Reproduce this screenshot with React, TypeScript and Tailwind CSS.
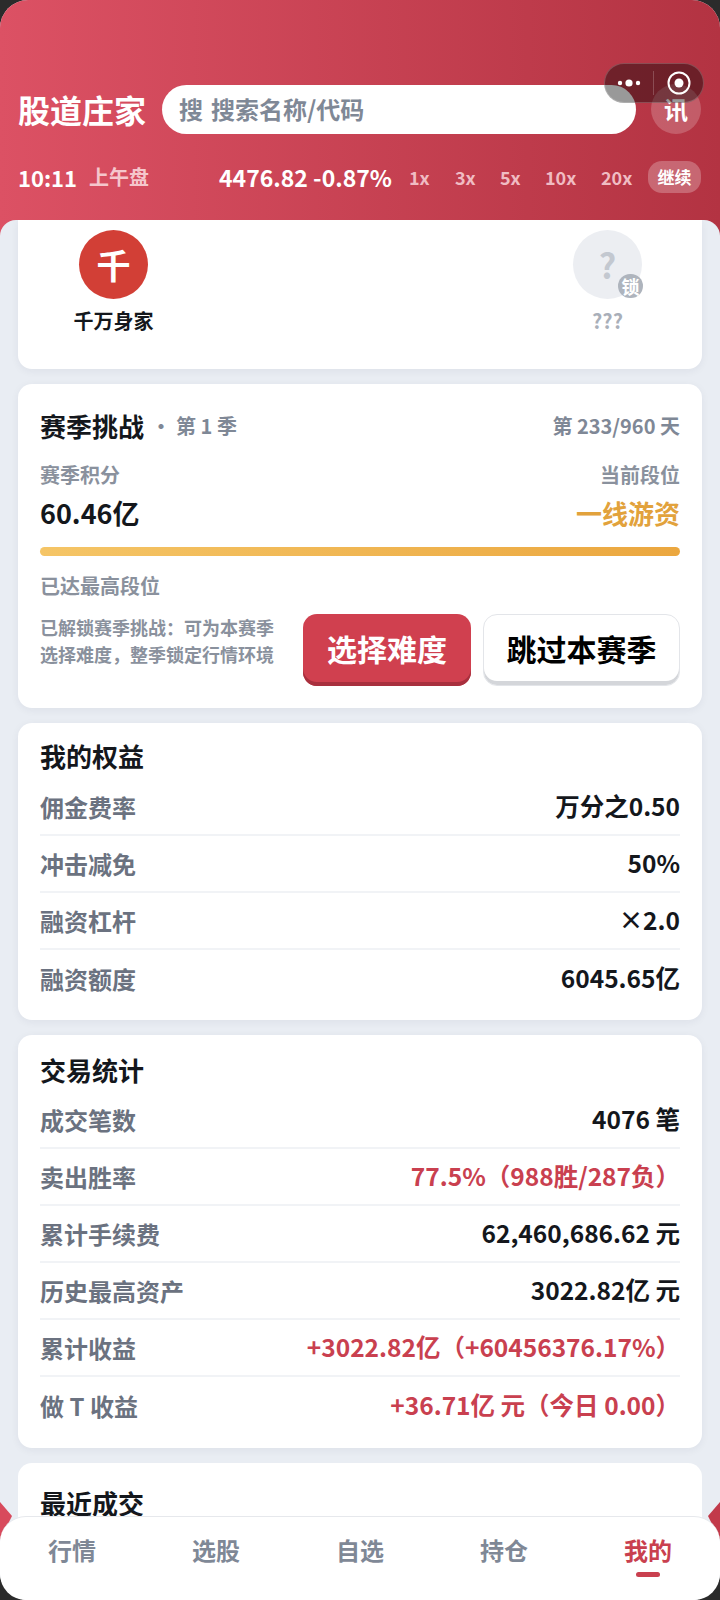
const font = "font-['Noto_Sans_CJK_SC','Noto_Sans',sans-serif]"

const rights = [
  { label: '佣金费率', value: '万分之0.50' },
  { label: '冲击减免', value: '50%' },
  { label: '融资杠杆', value: '×2.0' },
  { label: '融资额度', value: '6045.65亿' },
]

const stats = [
  { label: '成交笔数', value: '4076 笔' },
  { label: '卖出胜率', value: '77.5%（988胜/287负）', red: true },
  { label: '累计手续费', value: '62,460,686.62 元' },
  { label: '历史最高资产', value: '3022.82亿 元' },
  { label: '累计收益', value: '+3022.82亿（+60456376.17%）', red: true },
  { label: '做 T 收益', value: '+36.71亿 元（今日 0.00）', red: true },
]

const tabs = ['行情', '选股', '自选', '持仓', '我的']

function Row({ label, value, red, last }: { label: string; value: string; red?: boolean; last?: boolean }) {
  return (
    <div className={`flex h-[57px] items-center justify-between ${last ? '' : 'border-b-2 border-[#f1f3f6]'}`}>
      <span className="text-[24px] font-bold text-[#6b7280]">{label}</span>
      <span className={`text-[24.5px] font-bold ${red ? 'text-[#c9404f]' : 'text-[#14171c]'}`}>{value}</span>
    </div>
  )
}

export default function App() {
  return (
    <div className={`relative h-[1600px] w-[720px] overflow-hidden bg-[#2b2b2b] ${font}`}>
      <div className="flex h-full flex-col overflow-hidden rounded-[28px] bg-[#e9edf3]">
        {/* Header */}
        <div className="h-[240px] shrink-0 bg-[linear-gradient(90deg,#dc5164,#b33342)] pt-[84px] pl-[18px]">
          <div className="flex items-center">
            <span className="w-[128px] text-[32px] leading-[49px] font-bold whitespace-nowrap text-white">股道庄家</span>
            <div className="ml-[16px] flex h-[49px] w-[474px] items-center rounded-full bg-white pl-[17px]">
              <span className="text-[24px] font-bold text-[#7f8896]">搜</span>
              <span className="ml-[8px] text-[24px] font-bold text-[#7f8896]">搜索名称/代码</span>
            </div>
            <div className="ml-[15px] flex h-[50px] w-[50px] items-center justify-center rounded-full bg-white/20 text-[24px] font-bold text-white">讯</div>
          </div>
          <div className="mt-[27px] flex h-[32px] items-center text-white">
            <div className="flex w-[201px] items-center">
              <span className="text-[22px] font-bold">10:11</span>
              <span className="ml-[12px] text-[20px] font-bold text-[#f5c6cc]">上午盘</span>
            </div>
            <span className="w-[190px] text-[23px] font-bold whitespace-nowrap">4476.82 -0.87%</span>
            <div className="flex items-center text-[18px] font-bold text-[#f0bcc3]">
              <span className="w-[46px]">1x</span>
              <span className="w-[45px]">3x</span>
              <span className="w-[45px]">5x</span>
              <span className="w-[56px]">10x</span>
              <span className="w-[47px]">20x</span>
            </div>
            <span className="flex h-[32px] w-[53px] items-center justify-center rounded-[14px] bg-white/25 text-[17px] font-bold">继续</span>
          </div>
        </div>

        {/* Scroll content */}
        <div className="relative -mt-[20px] flex flex-1 flex-col gap-[15px] overflow-hidden rounded-t-[16px] bg-[#e9edf3] px-[18px]">
          <div className="flex h-[149px] shrink-0 justify-between rounded-b-[14px] bg-white pt-[10px] pr-[49px] pl-[50px] shadow-[0_2px_8px_rgba(30,40,60,0.06)]">
            <div className="flex w-[91px] flex-col items-center">
              <div className="flex h-[69px] w-[69px] items-center justify-center rounded-full bg-[#d23f36] text-[34px] font-bold text-white">千</div>
              <span className="mt-[7px] text-[20px] font-bold whitespace-nowrap text-[#14171c]">千万身家</span>
            </div>
            <div className="relative flex w-[91px] flex-col items-center">
              <div className="flex h-[69px] w-[69px] items-center justify-center rounded-full bg-[#eceef2] text-[34px] font-bold text-[#c3c8d0]">?</div>
              <span className="absolute top-[44px] right-[10px] flex h-[24px] w-[25px] items-center justify-center rounded-full bg-[#aeb4bd] text-[18px] font-bold text-white">锁</span>
              <span className="mt-[7px] text-[20px] font-bold text-[#a9afb9]">???</span>
            </div>
          </div>

          <div className="flex h-[324px] shrink-0 flex-col rounded-[14px] bg-white px-[22px] pt-[26px] shadow-[0_2px_8px_rgba(30,40,60,0.06)]">
            <div className="flex items-center justify-between">
              <div className="flex items-center">
                <span className="text-[26px] leading-[32px] font-bold text-[#14171c]">赛季挑战</span>
                <span className="-mr-[3px] ml-[7px] text-[20px] font-bold text-[#7f8896]">·</span>
                <span className="ml-[8px] text-[20px] font-bold text-[#7f8896]">第 1 季</span>
              </div>
              <span className="text-[20px] font-bold text-[#7f8896]">第 233/960 天</span>
            </div>
            <div className="mt-[20px] flex justify-between text-[20px] leading-[26px] font-bold text-[#8a919d]">
              <span>赛季积分</span>
              <span>当前段位</span>
            </div>
            <div className="mt-[7px] flex justify-between leading-[36px] font-bold">
              <span className="text-[27px] text-[#14171c]">60.46亿</span>
              <span className="text-[26px] text-[#e2a23c]">一线游资</span>
            </div>
            <div className="mt-[16px] h-[9px] rounded-full bg-[linear-gradient(90deg,#f5c566,#eba73f)]" />
            <div className="mt-[17px] text-[20px] leading-[26px] font-bold text-[#8a919d]">已达最高段位</div>
            <div className="mt-[15px] flex items-start">
              <div className="w-[263px] text-[18px] leading-[27px] font-bold whitespace-nowrap text-[#8a919d]">
                <div>已解锁赛季挑战：可为本赛季</div>
                <div>选择难度，整季锁定行情环境</div>
              </div>
              <button className="h-[72px] w-[168px] rounded-[14px] bg-[#d0404f] pb-[4px] text-[30px] font-bold text-white shadow-[inset_0_-4px_0_#a8303e]">选择难度</button>
              <button className="ml-[12px] h-[72px] w-[197px] rounded-[14px] border border-[#e3e5e9] bg-white pb-[4px] text-[30px] font-bold text-black shadow-[inset_0_-4px_0_#d4d6da]">跳过本赛季</button>
            </div>
          </div>

          <div className="h-[297px] shrink-0 rounded-[14px] bg-white px-[22px] pt-[15px] shadow-[0_2px_8px_rgba(30,40,60,0.06)]">
            <div className="mb-[5px] text-[26px] leading-[36px] font-bold text-[#14171c]">我的权益</div>
            {rights.map((r, i) => (
              <Row key={r.label} label={r.label} value={r.value} last={i === rights.length - 1} />
            ))}
          </div>

          <div className="h-[413px] shrink-0 rounded-[14px] bg-white px-[22px] pt-[17px] shadow-[0_2px_8px_rgba(30,40,60,0.06)]">
            <div className="mb-[4px] text-[26px] leading-[36px] font-bold text-[#14171c]">交易统计</div>
            {stats.map((s, i) => (
              <Row key={s.label} label={s.label} value={s.value} red={s.red} last={i === stats.length - 1} />
            ))}
          </div>

          <div className="h-[200px] shrink-0 rounded-[14px] bg-white px-[22px] pt-[22px]">
            <div className="text-[26px] leading-[36px] font-bold text-[#14171c]">最近成交</div>
          </div>
        </div>
      </div>

      {/* Red page background showing beside the tab bar corners */}
      <div className="absolute top-[1502px] left-0 h-[38px] w-[12px] bg-[#d84a5c] [clip-path:polygon(0_0,100%_37%,0_100%)]" />
      <div className="absolute top-[1502px] right-0 h-[38px] w-[12px] bg-[#c23a4a] [clip-path:polygon(100%_0,0_37%,100%_100%)]" />

      {/* Tab bar */}
      <div className="absolute right-0 bottom-0 left-0 grid h-[84px] grid-cols-5 rounded-[26px] border-t border-[#e6e8ec] bg-white pt-[15px]">
        {tabs.map((t, i) => (
          <div key={t} className="flex flex-col items-center">
            <span className={`text-[24px] leading-[36px] font-bold ${i === 4 ? 'text-[#c9404f]' : 'text-[#7f8896]'}`}>{t}</span>
            {i === 4 && <div className="mt-[4px] h-[5px] w-[24px] rounded-full bg-[#c9404f]" />}
          </div>
        ))}
      </div>

      {/* Mini program capsule */}
      <div className="absolute top-[63px] left-[604px] flex h-[40px] w-[100px] items-center rounded-full border border-white/20 bg-black/40">
        <div className="flex h-full w-[48px] items-center justify-center">
          <svg width="26" height="10" viewBox="0 0 26 10" fill="white">
            <circle cx="4" cy="5" r="2.2" />
            <circle cx="13" cy="5" r="3.6" />
            <circle cx="22" cy="5" r="2.2" />
          </svg>
        </div>
        <div className="h-[24px] w-px bg-white/20" />
        <div className="flex flex-1 items-center justify-center">
          <svg width="24" height="24" viewBox="0 0 24 24" fill="none">
            <circle cx="12" cy="12" r="10.5" stroke="white" strokeWidth="2" />
            <circle cx="12" cy="12" r="4.5" fill="white" />
          </svg>
        </div>
      </div>
    </div>
  )
}
